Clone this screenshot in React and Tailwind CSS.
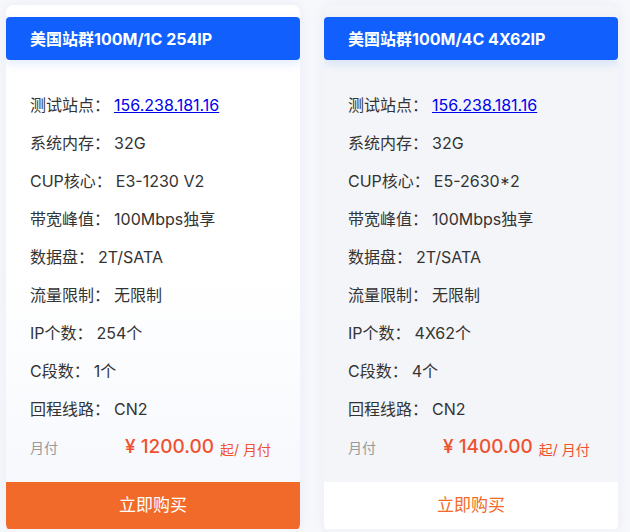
import React from "react";

const font = { fontFamily: '"Inter", "Noto Sans CJK SC", sans-serif' };

function Card({ title, rows, price, featured }) {
  return (
    <div
      className={
        "w-[294px] rounded-lg flex flex-col pt-3 overflow-hidden shadow-[0_0_16px_rgba(200,210,235,0.35)] " +
        (featured
          ? "bg-gradient-to-b from-white via-white to-[#f4f7fc]"
          : "bg-[#f3f5f8]")
      }
    >
      <div className="h-[43px] rounded bg-[#1160fe] flex items-center px-6 text-white font-bold text-[16px] shadow-[0_4px_10px_rgba(17,96,254,0.12)]">
        美国站群100M/{title}
      </div>
      <div className="mt-[26px] flex flex-col px-6 text-[16px] text-[#333]">
        {rows.map(([k, v], i) => (
          <div key={i} className="h-[38px] flex items-center">
            <span>{k}：</span>
            {i === 0 ? (
              <a href="#" className="ml-1 text-[#0000ee] underline">
                {v}
              </a>
            ) : (
              <span className="ml-1">{v}</span>
            )}
          </div>
        ))}
        <div className="h-[38px] flex items-center">
          <span className="text-[14px] text-[#999] w-[95px]">月付</span>
          <span className="text-[19px] text-[#f0522f] font-medium">¥ {price}</span>
          <span className="text-[14px] text-[#f0522f] ml-1.5 mt-1">起/ 月付</span>
        </div>
      </div>
      <div
        className={
          "mt-4 h-[47px] flex items-center justify-center text-[17px] " +
          (featured ? "bg-[#f26a29] text-white" : "bg-white text-[#f26a29]")
        }
      >
        立即购买
      </div>
    </div>
  );
}

export default function App() {
  const rows1 = [
    ["测试站点", "156.238.181.16"],
    ["系统内存", "32G"],
    ["CUP核心", "E3-1230 V2"],
    ["带宽峰值", "100Mbps独享"],
    ["数据盘", "2T/SATA"],
    ["流量限制", "无限制"],
    ["IP个数", "254个"],
    ["C段数", "1个"],
    ["回程线路", "CN2"],
  ];
  const rows2 = [
    ["测试站点", "156.238.181.16"],
    ["系统内存", "32G"],
    ["CUP核心", "E5-2630*2"],
    ["带宽峰值", "100Mbps独享"],
    ["数据盘", "2T/SATA"],
    ["流量限制", "无限制"],
    ["IP个数", "4X62个"],
    ["C段数", "4个"],
    ["回程线路", "CN2"],
  ];
  return (
    <div className="w-[630px] h-[532px] bg-[#f8f9fc] flex gap-6 pl-[6px] pt-[5px]" style={font}>
      <Card title="1C 254IP" rows={rows1} price="1200.00" featured />
      <Card title="4C 4X62IP" rows={rows2} price="1400.00" />
    </div>
  );
}
